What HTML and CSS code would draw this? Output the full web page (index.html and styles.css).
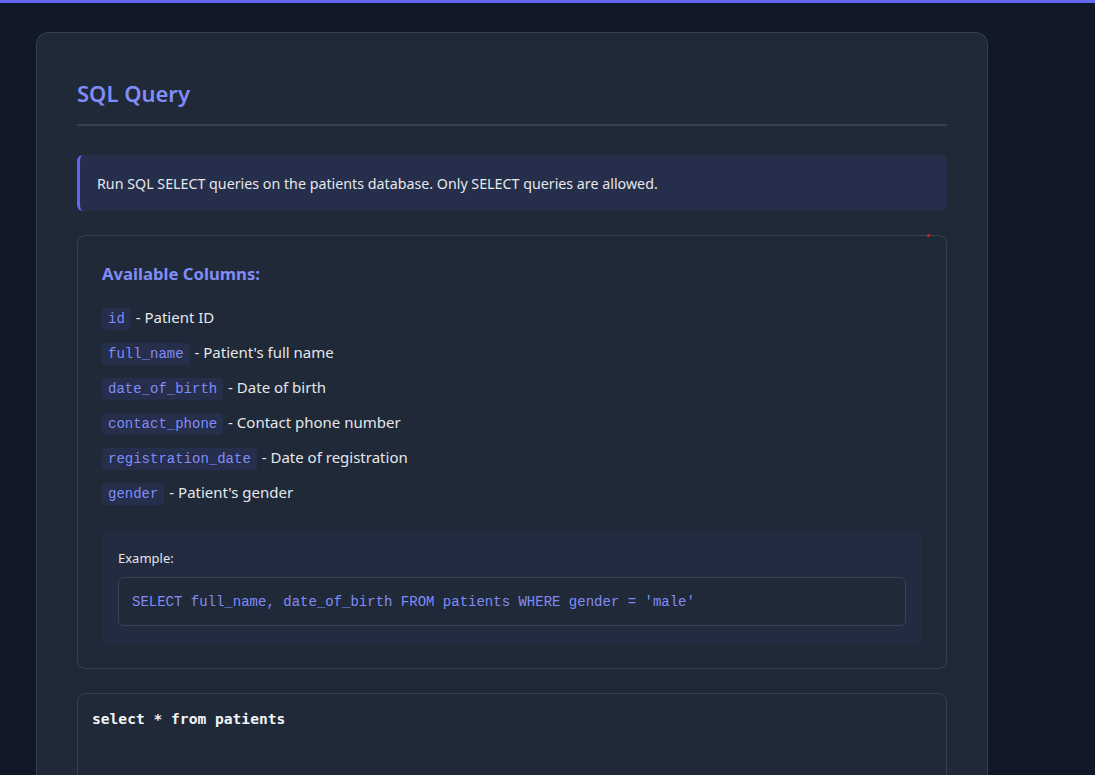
FILE: index.html
```html
<!DOCTYPE html>
<html lang="en">
<head>
<meta charset="utf-8">
<title>SQL Query</title>
<link rel="stylesheet" href="styles.css">
</head>
<body>
<div class="topbar"></div>
<main class="page">
  <section class="card">
    <h1 class="title">SQL Query</h1>
    <div class="info">Run SQL SELECT queries on the patients database. Only SELECT queries are allowed.</div>
    <div class="columns">
      <span class="dot"></span>
      <h2 class="columns-title">Available Columns:</h2>
      <ul class="col-list">
        <li><code class="chip">id</code> - Patient ID</li>
        <li><code class="chip">full_name</code> - Patient's full name</li>
        <li><code class="chip">date_of_birth</code> - Date of birth</li>
        <li><code class="chip">contact_phone</code> - Contact phone number</li>
        <li><code class="chip">registration_date</code> - Date of registration</li>
        <li><code class="chip">gender</code> - Patient's gender</li>
      </ul>
      <div class="example">
        <div class="example-label">Example:</div>
        <pre class="example-code">SELECT full_name, date_of_birth FROM patients WHERE gender = 'male'</pre>
      </div>
    </div>
    <textarea class="query" spellcheck="false">select * from patients</textarea>
  </section>
</main>
</body>
</html>
```

FILE: styles.css
```css
* { box-sizing: border-box; }
html, body { margin: 0; padding: 0; }
body {
  background: #111827;
  font-family: "Noto Sans", "Open Sans", sans-serif;
  color: #e5e7eb;
  overflow: hidden;
  height: 775px;
}
.topbar {
  height: 3px;
  background: #6366f1;
}
.page {
  padding: 29px 0 0 36px;
}
.card {
  width: 952px;
  height: 760px;
  background: #1f2937;
  border: 1px solid #374151;
  border-radius: 12px;
  padding: 40px 40px 0 40px;
}
.title {
  margin: 0;
  font-size: 22px;
  font-weight: 600;
  color: #818cf8;
  line-height: 40px;
  padding-bottom: 11px;
  border-bottom: 2px solid #374151;
}
.info {
  margin-top: 29px;
  height: 56px;
  display: flex;
  align-items: center;
  padding-left: 17px;
  background: rgba(99, 102, 241, 0.1);
  border-left: 3px solid #6366f1;
  border-radius: 6px;
  font-size: 14.25px;
  color: #e5e7eb;
}
.columns {
  position: relative;
  margin-top: 24px;
  border: 1px solid #374151;
  border-radius: 8px;
  padding: 24px 24px 24px 24px;
}
.dot {
  position: absolute;
  top: -2px;
  right: 16px;
  width: 3px;
  height: 3px;
  border-radius: 50%;
  background: #e11d1d;
}
.columns-title {
  margin: 0;
  font-size: 16.7px;
  font-weight: 700;
  color: #818cf8;
  line-height: 28px;
}
.col-list {
  list-style: none;
  margin: 18px 0 0 0;
  padding: 0;
  display: flex;
  flex-direction: column;
  gap: 11px;
}
.col-list li {
  font-size: 15px;
  line-height: 22px;
  color: #e5e7eb;
}
.chip {
  display: inline-block;
  font-family: "Liberation Mono", "Courier New", monospace;
  font-size: 14px;
  color: #818cf8;
  background: rgba(99, 102, 241, 0.1);
  border-radius: 3px;
  padding: 0 6px;
  line-height: 22px;
  margin-right: 1px;
}
.example {
  margin-top: 25px;
  background: rgba(99, 102, 241, 0.05);
  border-radius: 6px;
  padding: 16px 16px 18px 16px;
}
.example-label {
  font-size: 13px;
  line-height: 24px;
  color: #e5e7eb;
}
.example-code {
  margin: 7px 0 0 0;
  border: 1px solid #374151;
  border-radius: 6px;
  background: #1f2937;
  padding: 14px 13px 12px 13px;
  font-family: "Liberation Mono", "Courier New", monospace;
  font-size: 14px;
  line-height: 21px;
  color: #818cf8;
}
.query {
  display: block;
  margin-top: 24px;
  width: 100%;
  height: 200px;
  background: #1f2937;
  border: 1px solid #374151;
  border-radius: 8px;
  padding: 16px 14px;
  font-family: "DejaVu Sans Mono", monospace;
  font-size: 14.6px;
  font-weight: 700;
  color: #f3f4f6;
  resize: none;
  outline: none;
}
```
